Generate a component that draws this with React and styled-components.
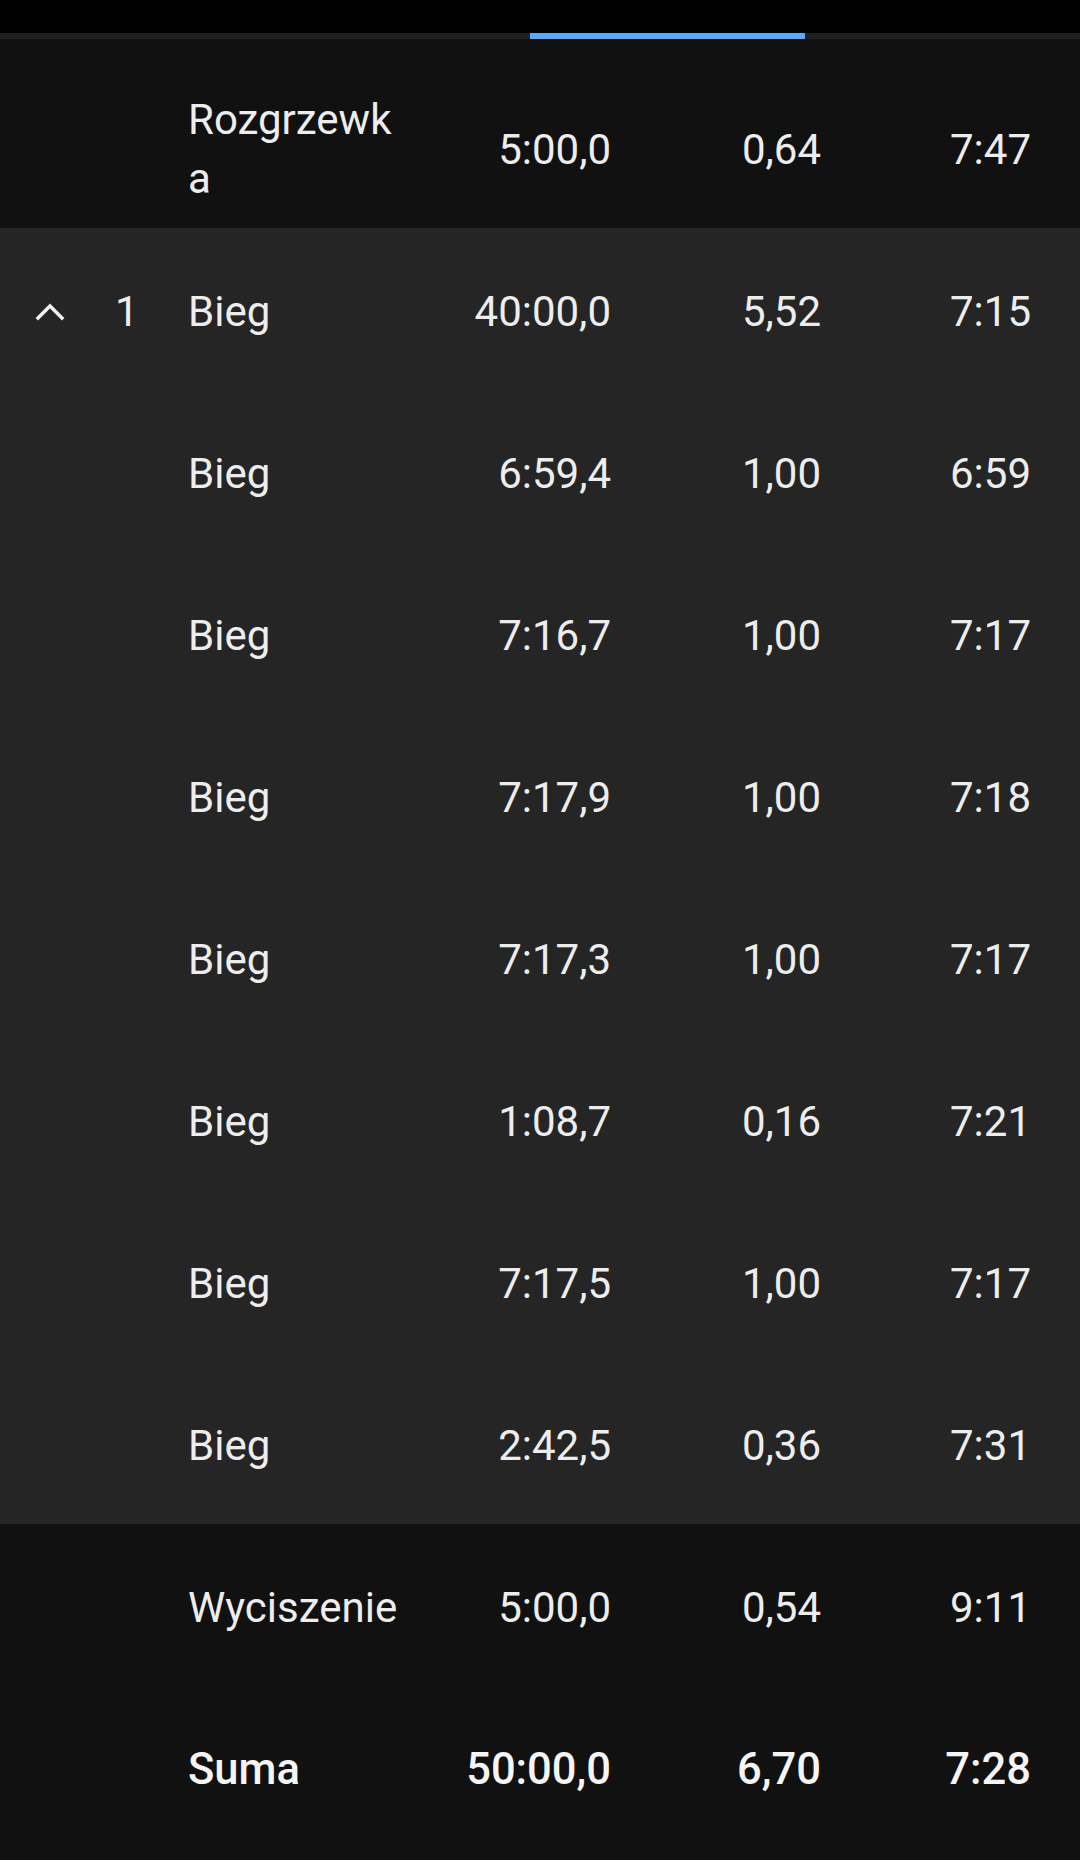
import React from 'react';
import styled, { createGlobalStyle } from 'styled-components';

const Global = createGlobalStyle`
  html, body {
    margin: 0;
    padding: 0;
    background: #111111;
  }
  body {
    font-family: Roboto, "Noto Sans", "Liberation Sans", sans-serif;
    -webkit-font-smoothing: antialiased;
  }
`;

const laps = [
  { time: '6:59,4', dist: '1,00', pace: '6:59' },
  { time: '7:16,7', dist: '1,00', pace: '7:17' },
  { time: '7:17,9', dist: '1,00', pace: '7:18' },
  { time: '7:17,3', dist: '1,00', pace: '7:17' },
  { time: '1:08,7', dist: '0,16', pace: '7:21' },
  { time: '7:17,5', dist: '1,00', pace: '7:17' },
  { time: '2:42,5', dist: '0,36', pace: '7:31' },
];

function Chevron() {
  return (
    <svg width="30" height="18" viewBox="0 0 30 18">
      <polyline points="3,15 15,3 27,15" fill="none" stroke="#f2f2f2" strokeWidth="3.4" strokeLinecap="square" />
    </svg>
  );
}

function App() {
  return (
    <Screen>
      <Global />
      <TabBar />
      <TabTrack>
        <Indicator />
      </TabTrack>

      <Row $tone="dark" $pad="51px 0 20px">
        <Cell />
        <Index />
        <Name>Rozgrzewka</Name>
        <Num>5:00,0</Num>
        <Num>0,64</Num>
        <Num>7:47</Num>
      </Row>

      <Group>
        <Row>
          <Cell><Chevron /></Cell>
          <Index>1</Index>
          <Name>Bieg</Name>
          <Num>40:00,0</Num>
          <Num>5,52</Num>
          <Num>7:15</Num>
        </Row>
        {laps.map((lap, i) => (
          <Row key={i}>
            <Cell />
            <Index />
            <Name>Bieg</Name>
            <Num>{lap.time}</Num>
            <Num>{lap.dist}</Num>
            <Num>{lap.pace}</Num>
          </Row>
        ))}
      </Group>

      <Row $tone="dark">
        <Cell />
        <Index />
        <Name>Wyciszenie</Name>
        <Num>5:00,0</Num>
        <Num>0,54</Num>
        <Num>9:11</Num>
      </Row>

      <Row $tone="dark" $total>
        <Cell />
        <Index />
        <Name>Suma</Name>
        <Num>50:00,0</Num>
        <Num>6,70</Num>
        <Num>7:28</Num>
      </Row>
    </Screen>
  );
}

const Screen = styled.div`
  width: 1080px;
  min-height: 1860px;
  background: #111111;
  display: flex;
  flex-direction: column;
  overflow: hidden;
`;

const TabBar = styled.div`
  height: 33px;
  background: #000000;
`;

const TabTrack = styled.div`
  height: 6px;
  background: #1f1f1f;
  display: flex;
`;

const Indicator = styled.div`
  margin-left: 530px;
  width: 275px;
  height: 6px;
  background: #5aa8f8;
`;

const Group = styled.div`
  background: #252525;
  display: flex;
  flex-direction: column;
`;

const Row = styled.div`
  display: grid;
  grid-template-columns: 100px 88px 215px 208px 210px 210px;
  align-items: center;
  min-height: 162px;
  box-sizing: border-box;
  padding: ${(p) => p.$pad || '37px 0 33px'};
  background: ${(p) => (p.$tone === 'dark' ? '#111111' : 'transparent')};
  color: ${(p) => (p.$total ? '#f5f5f5' : '#ededed')};
  font-size: ${(p) => (p.$total ? '43.5px' : '42px')};
  font-weight: ${(p) => (p.$total ? 500 : 400)};
  line-height: 59px;
`;

const Cell = styled.div`
  display: flex;
  justify-content: center;
  align-items: center;
  height: 59px;
  padding-top: 2px;
`;

const Index = styled.div`
  padding-left: 15px;
  font-size: 42px;
`;

const Name = styled.div`
  word-break: break-all;
`;

const Num = styled.div`
  text-align: right;
  white-space: nowrap;
`;

export default App;
